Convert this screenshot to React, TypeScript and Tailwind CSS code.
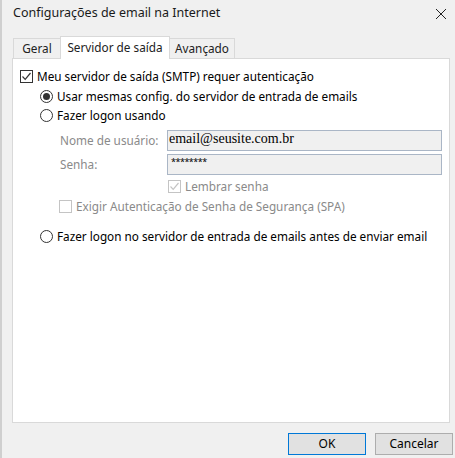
import React from 'react'

const font = { fontFamily: '"Segoe UI", "Noto Sans", "Liberation Sans", sans-serif' }

const Radio = ({ checked }: { checked?: boolean }) => (
  <span className="w-[13px] h-[13px] rounded-full border border-[#333] bg-white flex items-center justify-center shrink-0">
    {checked && <span className="w-[7px] h-[7px] rounded-full bg-[#333]" />}
  </span>
)

const Check = ({ checked, disabled }: { checked?: boolean; disabled?: boolean }) => (
  <span
    className={`w-[13px] h-[13px] border bg-white flex items-center justify-center shrink-0 ${
      disabled ? 'border-[#c4c4c4]' : 'border-[#333]'
    }`}
  >
    {checked && (
      <svg width="11" height="11" viewBox="0 0 11 11">
        <path
          d="M1.5 5.5 L4.2 8.3 L9.5 2"
          fill="none"
          stroke={disabled ? '#c4c4c4' : '#333'}
          strokeWidth="1.2"
        />
      </svg>
    )}
  </span>
)

export default function App() {
  return (
    <div
      className="w-[455px] h-[458px] bg-[#f0f0f0] flex flex-col text-[11.75px] text-black border-l-2 border-[#cfcfcf] overflow-hidden"
      style={font}
    >
      {/* Title bar */}
      <div className="h-[27px] flex items-center justify-between pl-[11px] pr-[8px] shrink-0">
        <span className="text-[12.5px] text-[#1a1a1a]">Configurações de email na Internet</span>
        <svg width="12" height="12" viewBox="0 0 12 12">
          <path d="M1 1 L11 11 M11 1 L1 11" stroke="#222" strokeWidth="1" />
        </svg>
      </div>

      {/* Tabs */}
      <div className="h-[31px] flex items-end pl-[11px] shrink-0">
        <div className="w-[48px] h-[20px] border border-b-0 border-[#d9d9d9] bg-[#f0f0f0] flex items-center justify-center text-[#222]">
          Geral
        </div>
        <div className="w-[110px] h-[23px] border border-b-0 border-[#d9d9d9] bg-white flex items-center justify-center -mb-px -ml-px relative z-10 text-[#222]">
          Servidor de saída
        </div>
        <div className="w-[65px] h-[20px] border border-b-0 border-l-0 border-[#d9d9d9] bg-[#f0f0f0] flex items-center justify-center text-[#222]">
          Avançado
        </div>
      </div>

      {/* Panel */}
      <div className="flex-1 ml-[10px] mr-[5px] bg-white border border-[#d9d9d9] pt-[9px] pl-[7px] pr-[7px] flex flex-col">
        <label className="flex items-center gap-[4px] h-[17px]">
          <Check checked />
          <span>Meu servidor de saída (SMTP) requer autenticação</span>
        </label>

        <div className="pl-[20px] flex flex-col">
          <label className="flex items-center gap-[4px] h-[19px] mt-[2px]">
            <Radio checked />
            <span>Usar mesmas config. do servidor de entrada de emails</span>
          </label>
          <label className="flex items-center gap-[4px] h-[19px]">
            <Radio />
            <span>Fazer logon usando</span>
          </label>

          <div className="pl-[20px] flex flex-col text-[#8a8a8a]">
            <div className="flex items-center mt-[5px]">
              <span className="w-[107px]">Nome de usuário:</span>
              <div className="flex-1 h-[21px] bg-[#f0f0f0] border border-[#aab6c6] flex items-center pl-[1px]">
                <span className="text-[14px] text-black leading-none -mt-[3px]" style={{ fontFamily: '"Liberation Serif", serif' }}>
                  email@seusite.com.br
                </span>
              </div>
            </div>
            <div className="flex items-center mt-[3px]">
              <span className="w-[107px]">Senha:</span>
              <div className="flex-1 h-[21px] bg-[#f0f0f0] border border-[#aab6c6] flex items-start pl-[3px]">
                <span className="text-[9px] text-black leading-none mt-[2px] tracking-[-0.5px]">********</span>
              </div>
            </div>
            <label className="flex items-center gap-[4px] h-[19px] mt-[2px] ml-[108px]">
              <Check checked disabled />
              <span>Lembrar senha</span>
            </label>
            <label className="flex items-center gap-[4px] h-[19px] mt-px -ml-px">
              <Check disabled />
              <span>Exigir Autenticação de Senha de Segurança (SPA)</span>
            </label>
          </div>

          <label className="flex items-center gap-[4px] h-[19px] mt-[11px]">
            <Radio />
            <span>Fazer logon no servidor de entrada de emails antes de enviar email</span>
          </label>
        </div>
      </div>

      {/* Buttons */}
      <div className="h-[35px] flex items-start justify-end gap-[9px] pt-[10px] pr-[2px] shrink-0">
        <button className="w-[78px] h-[22px] bg-[#e1e1e1] border border-[#0078d7] text-[12px]">OK</button>
        <button className="w-[78px] h-[22px] bg-[#e1e1e1] border border-[#adadad] text-[12px]">Cancelar</button>
      </div>
    </div>
  )
}
